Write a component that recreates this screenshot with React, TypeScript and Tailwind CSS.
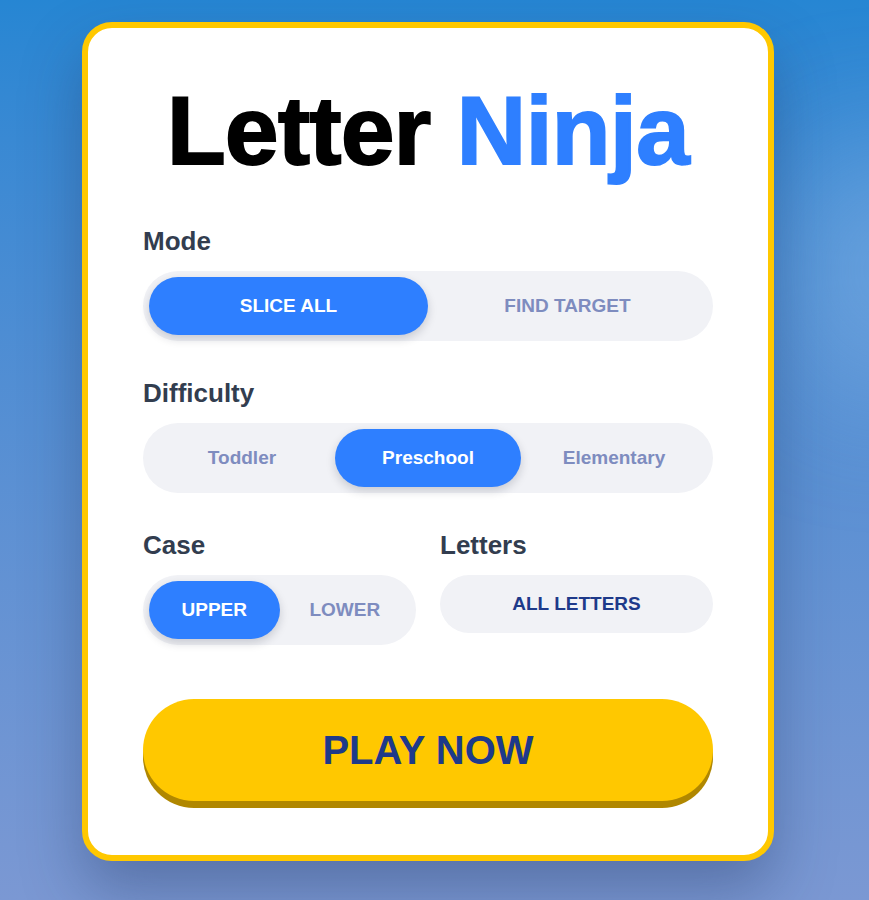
import { useState } from 'react';

type Option = { value: string; label: string };

function Segmented({
  options,
  value,
  onChange,
}: {
  options: Option[];
  value: string;
  onChange: (v: string) => void;
}) {
  return (
    <div className="flex h-[70px] rounded-full bg-[#f1f2f6] p-[6px]">
      {options.map((opt) => {
        const active = opt.value === value;
        return (
          <button
            key={opt.value}
            type="button"
            onClick={() => onChange(opt.value)}
            className={
              active
                ? 'flex-1 rounded-full bg-[#2e7fff] text-[19px] font-bold text-white shadow-[0_4px_10px_rgba(15,23,42,0.18)]'
                : 'flex-1 rounded-full text-[19px] font-bold text-[#7e8cbf]'
            }
          >
            {opt.label}
          </button>
        );
      })}
    </div>
  );
}

function Label({ children }: { children: React.ReactNode }) {
  return <h2 className="mb-[14px] text-[26px] leading-[32px] font-bold text-[#323d4f]">{children}</h2>;
}

export default function App() {
  const [mode, setMode] = useState('slice');
  const [difficulty, setDifficulty] = useState('preschool');
  const [letterCase, setLetterCase] = useState('upper');

  return (
    <div className="relative min-h-screen overflow-hidden bg-gradient-to-b from-[#2686d3] to-[#7b98d3] font-['Liberation_Sans',Arial,sans-serif]">
      {/* soft glow on the right edge */}
      <div className="pointer-events-none absolute right-[-120px] top-[140px] h-[260px] w-[200px] rounded-full bg-[#9cc0ea]/40 blur-3xl" />

      <div className="relative flex justify-center pr-[13px] pt-[22px]">
        <div className="w-[692px] rounded-[30px] border-[6px] border-[#ffc800] bg-white px-[55px] pt-[55px] pb-[54px] shadow-[0_30px_60px_rgba(30,45,90,0.35)]">
          <h1 className="mb-[46px] text-center text-[96px] leading-none font-bold tracking-[-0.5px]">
            <span className="text-black [-webkit-text-stroke:2px_#000]">Letter</span>{' '}
            <span className="text-[#2e7fff] [-webkit-text-stroke:2px_#2e7fff]">Ninja</span>
          </h1>

          <div className="flex flex-col gap-9">
            <div>
              <Label>Mode</Label>
              <Segmented
                options={[
                  { value: 'slice', label: 'SLICE ALL' },
                  { value: 'find', label: 'FIND TARGET' },
                ]}
                value={mode}
                onChange={setMode}
              />
            </div>

            <div>
              <Label>Difficulty</Label>
              <Segmented
                options={[
                  { value: 'toddler', label: 'Toddler' },
                  { value: 'preschool', label: 'Preschool' },
                  { value: 'elementary', label: 'Elementary' },
                ]}
                value={difficulty}
                onChange={setDifficulty}
              />
            </div>

            <div className="grid grid-cols-2 gap-6">
              <div>
                <Label>Case</Label>
                <Segmented
                  options={[
                    { value: 'upper', label: 'UPPER' },
                    { value: 'lower', label: 'LOWER' },
                  ]}
                  value={letterCase}
                  onChange={setLetterCase}
                />
              </div>
              <div>
                <Label>Letters</Label>
                <button
                  type="button"
                  className="h-[58px] w-full rounded-full bg-[#f1f2f6] text-[19px] font-bold text-[#1e3a8a]"
                >
                  ALL LETTERS
                </button>
              </div>
            </div>
          </div>

          <button
            type="button"
            className="mt-[54px] h-[102px] w-full rounded-full bg-[#ffc800] text-[40px] font-bold text-[#1e3a8a] shadow-[0_7px_0_#b08700]"
          >
            PLAY NOW
          </button>
        </div>
      </div>
    </div>
  );
}
